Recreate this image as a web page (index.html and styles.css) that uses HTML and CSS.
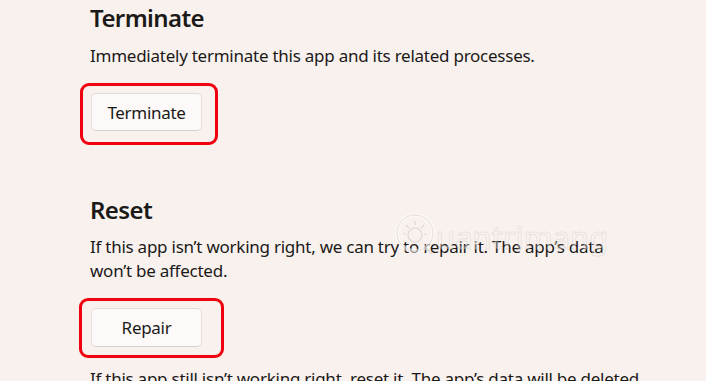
FILE: index.html
```html
<!DOCTYPE html>
<html>
<head>
<meta charset="utf-8">
<link rel="stylesheet" href="styles.css">
</head>
<body>
<main class="page">
  <section class="group group-terminate">
    <h2 class="title">Terminate</h2>
    <p class="desc">Immediately terminate this app and its related processes.</p>
    <div class="mark mark-one">
      <button class="btn" type="button">Terminate</button>
    </div>
  </section>
  <section class="group group-reset">
    <h2 class="title">Reset</h2>
    <p class="desc">If this app isn’t working right, we can try to repair it. The app’s data won’t be affected.</p>
    <div class="mark mark-two">
      <button class="btn" type="button">Repair</button>
    </div>
    <p class="desc desc-last">If this app still isn’t working right, reset it. The app’s data will be deleted.</p>
  </section>
  <div class="watermark" aria-hidden="true">
    <svg class="wm-logo" width="44" height="44" viewBox="0 0 44 44">
      <circle cx="21" cy="20" r="18" fill="none" stroke="#ffffff" stroke-width="4" opacity="0.7"/>
      <circle cx="21" cy="20" r="18" fill="none" stroke="#ddd6d3" stroke-width="1"/>
      <path d="M30 33l8 8" stroke="#ddd6d3" stroke-width="2" fill="none"/>
      <circle cx="21" cy="22" r="7" fill="none" stroke="#d6cfcc" stroke-width="1.2"/>
      <path d="M21 8v4M12 12l3 3M30 12l-3 3M9 21h3M33 21h-3" stroke="#d6cfcc" stroke-width="1.2" fill="none"/>
    </svg>
    <span class="wm-text">uantrimang</span>
  </div>
</main>
</body>
</html>
```

FILE: styles.css
```css
html, body {
  margin: 0;
  padding: 0;
}
body {
  background: #f9f1ed;
  font-family: "Noto Sans", "Open Sans", sans-serif;
  color: #1b1a19;
  width: 706px;
  height: 381px;
  overflow: hidden;
}
.page {
  position: relative;
  padding: 0 40px 0 90px;
  height: 381px;
}
.group {
  display: flex;
  flex-direction: column;
  align-items: flex-start;
}
.title {
  margin: 0;
  font-size: 24px;
  line-height: 32px;
  font-weight: 600;
  letter-spacing: -0.6px;
}
.group-terminate .title {
  padding-top: 2px;
}
.desc {
  margin: 0;
  max-width: 554px;
  font-size: 17px;
  line-height: 24px;
  font-weight: 400;
  letter-spacing: -0.25px;
}
.group-terminate .desc {
  margin-top: 10px;
}
.mark {
  border: 3px solid #f0000f;
  border-radius: 9px;
  display: flex;
}
.mark-one {
  margin: 15px 0 0 -10px;
  padding: 7px 13px 11px 8px;
}
.mark-two {
  margin: 15px 0 0 -11px;
  padding: 7px 19px 8px 9px;
}
.btn {
  width: 111px;
  height: 38px;
  padding: 0;
  border: 1px solid #e3dedc;
  border-bottom-color: #d6d1cf;
  border-radius: 5px;
  background: #fcf9f8;
  font-family: inherit;
  font-size: 17px;
  letter-spacing: -0.3px;
  color: #1b1a19;
}
.mark-two .btn {
  height: 39px;
}
.group-reset {
  margin-top: 49px;
}
.group-reset .desc {
  margin-top: 9px;
}
.group-reset .desc-last {
  margin-top: 9px;
}
.watermark {
  position: absolute;
  left: 394px;
  top: 213px;
  display: flex;
  align-items: flex-end;
  opacity: 0.75;
}
.wm-text {
  font-size: 31px;
  line-height: 40px;
  font-weight: 400;
  color: rgba(255,255,255,0.45);
  -webkit-text-stroke: 1px rgba(200,190,186,0.45);
  margin-left: -2px;
}
```
